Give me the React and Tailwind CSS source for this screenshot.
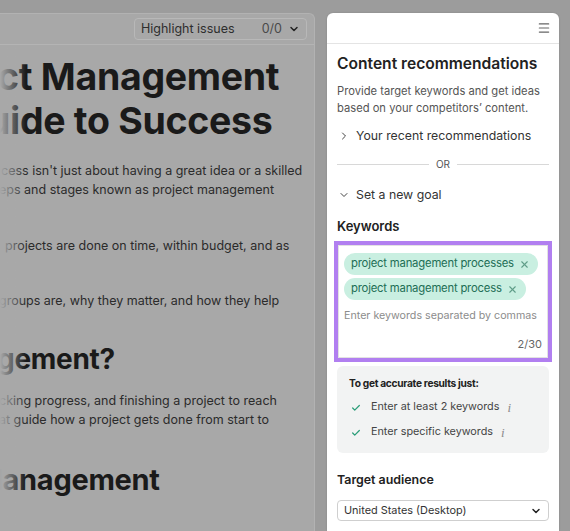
import React from "react";
import { ChevronRight, ChevronDown, Check, X, Menu } from "lucide-react";

function Chip({ label }) {
  return (
    <div className="inline-flex items-center h-[22px] rounded-full bg-[#c9efe1] pl-[7px] pr-[8px] gap-[5px] self-start whitespace-nowrap">
      <span className="text-[11.3px] tracking-[-0.2px] text-[#1d6e55] leading-none">{label}</span>
      <X className="w-[11px] h-[11px] text-[#5f9d89]" strokeWidth={2.4} />
    </div>
  );
}

function CheckItem({ label }) {
  return (
    <div className="flex items-center h-[25px] whitespace-nowrap">
      <Check className="w-[10px] h-[10px] text-[#2a9d78] ml-[2px]" strokeWidth={3} />
      <span className="ml-[10px] text-[10.8px] text-[#444]">{label}</span>
      <span className="ml-[8px] text-[13px] text-[#8a8a8a] italic" style={{ fontFamily: '"Liberation Serif", serif' }}>i</span>
    </div>
  );
}

export default function App() {
  return (
    <div
      className="w-[570px] h-[531px] bg-[#9c9c9c] pt-[13px] flex overflow-hidden"
      style={{ fontFamily: 'Inter, "Noto Sans", sans-serif' }}
    >
      {/* Document */}
      <div className="w-[315px] h-full bg-[#a8a8a8] border-r border-t border-[#b2b2b2] rounded-tr-[6px] flex flex-col shrink-0">
        <div className="h-[31px] border-b border-[#b4b4b4] flex items-center justify-end pr-[7px] shrink-0">
          <div className="w-[173px] h-[22px] border border-[#b8b8b8] rounded-[4px] flex items-center pl-[6px] pr-[6px]">
            <span className="text-[12.5px] text-[#2e2e2e]">Highlight issues</span>
            <span className="ml-auto text-[12.5px] text-[#4a4a4a]">0/0</span>
            <ChevronDown className="w-[12px] h-[12px] ml-[6px] text-[#222]" strokeWidth={3} />
          </div>
        </div>
        <div className="relative flex-1 overflow-hidden">
          <div className="absolute left-0 top-0 bottom-0 w-[26px] bg-gradient-to-r from-[#a8a8a8] to-transparent z-10" />
          <div className="whitespace-nowrap text-[#1a1a1a]">
            <div className="mt-[10px] text-[37.5px] font-bold leading-[44px] tracking-[-0.3px]">
              <div className="ml-[-3px]">ct Management</div>
              <div className="ml-[-13px]">uide to Success</div>
            </div>
            <div className="text-[12.5px] leading-[19px] text-[#2b2b2b]">
              <div className="mt-[18px] ml-[1px]">cess isn't just about having a great idea or a skilled</div>
              <div className="ml-[-1px]">eps and stages known as project management</div>
              <div className="mt-[37px] ml-[5px]">projects are done on time, within budget, and as</div>
              <div className="mt-[36px] ml-[-1px]">groups are, why they matter, and how they help</div>
            </div>
            <div className="mt-[31px] ml-[-3px] text-[28px] font-bold leading-[36px] tracking-[-0.3px]">gement?</div>
            <div className="text-[12.5px] leading-[19px] text-[#2b2b2b]">
              <div className="mt-[14px] ml-[-1px]">cking progress, and finishing a project to reach</div>
              <div className="ml-[-1px]">at guide how a project gets done from start to</div>
            </div>
            <div className="mt-[32px] ml-[-5px] text-[29px] font-bold leading-[38px] tracking-[-0.3px]">lanagement</div>
          </div>
        </div>
      </div>

      <div className="w-[12px] shrink-0" />

      {/* Panel */}
      <div className="w-[232px] h-full bg-white rounded-t-[6px] flex flex-col shrink-0 shadow-[0_0_2px_rgba(0,0,0,0.15)]">
        <div className="h-[31px] border-b border-[#e4e4e4] flex items-center justify-end pr-[8px] shrink-0">
          <Menu className="w-[14px] h-[14px] text-[#666]" strokeWidth={2} />
        </div>
        <div className="px-[10px] flex flex-col">
          <div className="mt-[9px] text-[15.6px] font-semibold text-[#222] leading-[22px] whitespace-nowrap">Content recommendations</div>
          <div className="mt-[8px] text-[11.2px] leading-[16.5px] text-[#555]">
            Provide target keywords and get ideas based on your competitors’ content.
          </div>
          <div className="mt-[11px] flex items-center h-[18px]">
            <ChevronRight className="w-[12px] h-[12px] text-[#444] ml-[1px]" strokeWidth={2} />
            <span className="ml-[6px] text-[12.3px] text-[#333]">Your recent recommendations</span>
          </div>
          <div className="mt-[14px] flex items-center gap-[7px]">
            <div className="flex-1 h-px bg-[#d8d8d8]" />
            <span className="text-[10px] text-[#555] leading-none">OR</span>
            <div className="flex-1 h-px bg-[#d8d8d8]" />
          </div>
          <div className="mt-[17px] flex items-center h-[18px]">
            <ChevronDown className="w-[12px] h-[12px] text-[#444] ml-[1px]" strokeWidth={2} />
            <span className="ml-[6px] text-[12.3px] text-[#333]">Set a new goal</span>
          </div>
          <div className="mt-[13px] text-[13px] font-semibold text-[#222] leading-[18px]">Keywords</div>
          <div className="mt-[6px] mx-[-3px] border-[4px] border-[#b17ff0] bg-white">
            <div className="border border-[#e2e2e2] pl-[5px] pr-[5px] pt-[7px] pb-[5px] flex flex-col">
              <div className="flex flex-col gap-[3px]">
                <Chip label="project management processes" />
                <Chip label="project management process" />
              </div>
              <div className="mt-[8px] text-[10.7px] text-[#8c8c8c] leading-[16px] whitespace-nowrap">Enter keywords separated by commas</div>
              <div className="mt-[12px] text-[11px] text-[#666] text-right leading-[16px]">2/30</div>
            </div>
          </div>
          <div className="mt-[4px] rounded-[6px] bg-[#f2f3f3] px-[12px] pt-[9px] pb-[8px]">
            <div className="text-[10.2px] tracking-[-0.3px] font-bold text-[#222] leading-[16px]">To get accurate results just:</div>
            <div className="mt-[4px]">
              <CheckItem label="Enter at least 2 keywords" />
              <CheckItem label="Enter specific keywords" />
            </div>
          </div>
          <div className="mt-[18px] text-[12.4px] font-semibold text-[#222] leading-[18px]">Target audience</div>
          <div className="mt-[11px] h-[21px] border border-[#cfcfcf] rounded-[4px] flex items-center pl-[6px] pr-[6px]">
            <span className="text-[10.9px] text-[#333]">United States (Desktop)</span>
            <ChevronDown className="ml-auto w-[12px] h-[12px] text-[#222]" strokeWidth={3} />
          </div>
        </div>
      </div>

      <div className="flex-1" />
    </div>
  );
}
